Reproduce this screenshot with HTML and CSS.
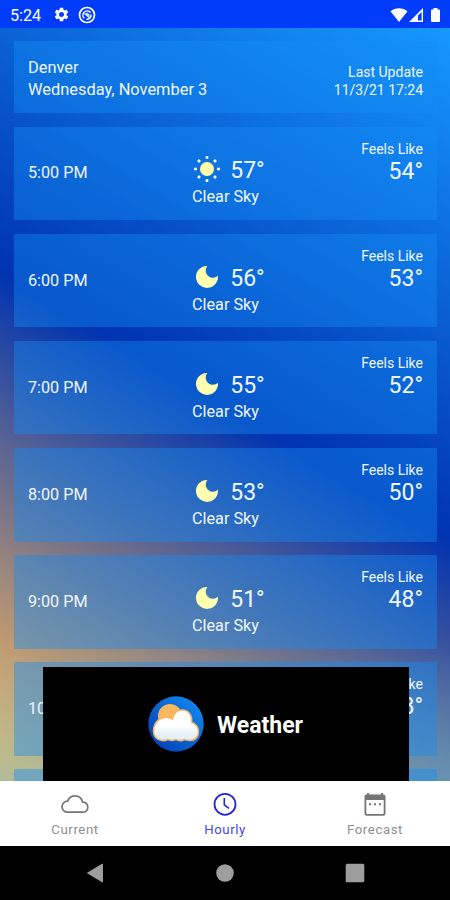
FILE: index.html
```html
<!DOCTYPE html>
<html lang="en">
<head>
    <meta charset="UTF-8">
    <meta name="viewport" content="width=device-width, initial-scale=1.0">
    <title>Weather - Hourly</title>
    <link rel="stylesheet" href="styles.css">
</head>
<body>
    <svg width="0" height="0" class="sprites">
        <symbol id="moon" viewBox="0 0 24 24">
            <path fill="#ffffb0" d="M12 .9A11 11 0 1 0 22.9 10.6C20.5 13.2 16.6 13.6 13.600 11.200C10.300 8.600 9.900 3.900 12.400 .9Z"/>
        </symbol>
    </svg>

    <div class="status-bar">
        <span class="clock">5:24</span>
        <svg class="gear" width="17" height="17" viewBox="0 0 24 24"><path fill="#fff" d="M19.14 12.94c.04-.3.06-.61.06-.94 0-.32-.02-.64-.07-.94l2.030-1.580c.18-.14.23-.41.12-.61l-1.920-3.320c-.12-.22-.37-.29-.59-.22l-2.390.96c-.5-.38-1.030-.7-1.620-.94l-.36-2.540c-.04-.24-.24-.41-.48-.41h-3.840c-.24 0-.43.17-.47.41l-.36 2.540c-.59.24-1.130.57-1.620.94l-2.390-.96c-.22-.08-.47 0-.59.22L2.740 8.870c-.12.21-.08.47.12.61l2.030 1.580c-.05.3-.09.63-.09.94s.02.64.07.94l-2.030 1.580c-.18.14-.23.41-.12.61l1.920 3.320c.12.22.37.29.59.22l2.390-.96c.5.38 1.030.7 1.620.94l.36 2.540c.05.24.24.41.48.41h3.840c.24 0 .44-.17.47-.41l.36-2.540c.59-.24 1.130-.56 1.620-.94l2.390.96c.22.08.47 0 .59-.22l1.920-3.320c.12-.22.07-.47-.12-.61l-2.010-1.580zM12 15.600c-1.980 0-3.600-1.620-3.600-3.600s1.620-3.600 3.600-3.600 3.600 1.620 3.600 3.600-1.620 3.600-3.600 3.600z"/></svg>
        <svg class="sync" width="18" height="18" viewBox="0 0 18 18" fill="none" stroke="#fff">
            <circle cx="9" cy="9" r="7.500" stroke-width="1.700"/>
            <path stroke-width="1.400" d="M6.200 12.200A4.300 4.300 0 0 1 6 6.200C8 4.200 11 4.500 12.500 6.500M13.100 8.500A4.300 4.300 0 0 1 8.500 13.200M6.500 7.500l5 4M8.500 7l3 2.500"/>
        </svg>
        <svg class="signals" width="52" height="16" viewBox="0 0 52 16" fill="#fff">
            <path d="M.5 4.200C5.300 .2 12.700 .2 17.500 4.200L9 15z"/>
            <path fill-rule="evenodd" d="M33 1v14H19zM31.600 5L28 8.600v5h3.600z"/>
            <path d="M43.500 1h4v1.500h1.500q1 0 1 1V14q0 1-1 1h-7q-1 0-1-1V3.500q0-1 1-1h1.500z"/>
        </svg>
    </div>

    <div class="screen">
        <div class="card header">
            <div class="place">Denver<br>Wednesday, November 3</div>
            <div class="update">Last Update<br>11/3/21 17:24</div>
        </div>

        <div class="card">
            <div class="time">5:00 PM</div>
            <div class="weather">
                <div class="temp">
                    <svg width="28" height="28" viewBox="0 0 28 28">
                        <circle cx="14" cy="14" r="7" fill="#ffffa8"/>
                        <path stroke="#ffffd0" stroke-width="2.600" d="M14 1v2.800M14 24.200V27M1 14h3M24 14h3M5 5l2 2M21 21l2 2M5 23l2-2M21 7l2-2"/>
                    </svg>
                    <span>57°</span>
                </div>
                <div>Clear Sky</div>
            </div>
            <div class="feels">Feels Like<b>54°</b></div>
        </div>

        <div class="card">
            <div class="time">6:00 PM</div>
            <div class="weather">
                <div class="temp"><svg class="moon" width="28" height="24"><use href="#moon"/></svg><span>56°</span></div>
                <div>Clear Sky</div>
            </div>
            <div class="feels">Feels Like<b>53°</b></div>
        </div>

        <div class="card">
            <div class="time">7:00 PM</div>
            <div class="weather">
                <div class="temp"><svg class="moon" width="28" height="24"><use href="#moon"/></svg><span>55°</span></div>
                <div>Clear Sky</div>
            </div>
            <div class="feels">Feels Like<b>52°</b></div>
        </div>

        <div class="card">
            <div class="time">8:00 PM</div>
            <div class="weather">
                <div class="temp"><svg class="moon" width="28" height="24"><use href="#moon"/></svg><span>53°</span></div>
                <div>Clear Sky</div>
            </div>
            <div class="feels">Feels Like<b>50°</b></div>
        </div>

        <div class="card">
            <div class="time">9:00 PM</div>
            <div class="weather">
                <div class="temp"><svg class="moon" width="28" height="24"><use href="#moon"/></svg><span>51°</span></div>
                <div>Clear Sky</div>
            </div>
            <div class="feels">Feels Like<b>48°</b></div>
        </div>

        <div class="card">
            <div class="time">10</div>
            <div class="feels">ke<b>8°</b></div>
        </div>

        <div class="card"></div>

        <!-- banner over the list -->
        <div class="banner">
            <svg width="56" height="56" viewBox="0 0 56 56">
                <defs>
                    <linearGradient id="disc" x1="1" y1="0" x2="0" y2="1">
                        <stop offset="0" stop-color="#1590f5"/>
                        <stop offset="1" stop-color="#0038b0"/>
                    </linearGradient>
                    <linearGradient id="puff" x1="0" y1="0" x2="0" y2="1">
                        <stop offset=".5" stop-color="#fff"/>
                        <stop offset="1" stop-color="#dceaf5"/>
                    </linearGradient>
                </defs>
                <circle cx="28" cy="28" r="27.700" fill="url(#disc)"/>
                <circle cx="22" cy="20" r="12" fill="#f8b75c"/>
                <path fill="url(#puff)" stroke="#f6b763" stroke-width="1.500" d="M14 44.500C8.500 44 5.500 40 5.500 35.500C5.500 28 10 22.500 16 21.500Q20 20.500 24.500 23C26 16.500 30 13.500 35 14C41 14.500 44.500 20 43.500 26C48 28 50.500 32 50.500 36C50.500 41 47 44.500 42 44.500Q38 44.500 36.500 43.500Q34 45 31 44.500L28 43.500L24 44.500L19.500 43.500Q17 45 14 44.500Z"/>
            </svg>
            <span>Weather</span>
        </div>
    </div>

    <div class="tabs">
        <div class="tab">
            <svg width="30" height="26" viewBox="0 0 30 26" fill="none" stroke="#757575" stroke-width="1.700">
                <path d="M7.500 21.200A5.500 5.500 0 0 1 7.500 10.200C9 6.500 11.500 4.800 15 4.800C19 4.800 21.800 7.300 22.600 11.200C25.800 11.400 27.800 13.500 27.800 16.200C27.800 19.200 25.600 21.200 22.500 21.200Z"/>
            </svg>
            <span>Current</span>
        </div>
        <div class="tab active">
            <svg width="30" height="26" viewBox="0 0 30 26" fill="none" stroke="#2424dc" stroke-width="1.800">
                <circle cx="15" cy="13.300" r="10.500"/>
                <path stroke-width="1.600" d="M14.300 7v6.800l4.700 3.500"/>
            </svg>
            <span>Hourly</span>
        </div>
        <div class="tab">
            <svg width="30" height="26" viewBox="0 0 30 26">
                <path fill="#757575" fill-rule="evenodd" d="M7 2h2v1.500h12V2h2v1.500h.5q2 0 2 2v17q0 2.200-2.200 2.200H6.700q-2.200 0-2.200-2.200v-17q0-2 2-2H7zM6.300 9v13q0 1 1 1h15.400q1 0 1-1V9z"/>
                <path fill="#757575" d="M9 12.300h2v2H9zM14 12.300h2v2h-2zM19 12.300h2v2h-2z"/>
            </svg>
            <span>Forecast</span>
        </div>
    </div>

    <div class="nav-bar">
        <svg width="20" height="20" viewBox="0 0 20 20"><path fill="#9e9e9e" stroke="#9e9e9e" stroke-linejoin="round" d="M2.500 10L17.500 1v18z"/></svg>
        <svg width="20" height="20" viewBox="0 0 20 20"><circle cx="10" cy="10" r="8.800" fill="#9e9e9e"/></svg>
        <svg width="20" height="20" viewBox="0 0 20 20"><rect x=".7" y=".7" width="18.600" height="18.600" rx="1.500" fill="#9e9e9e"/></svg>
    </div>
</body>
</html>
```
FILE: styles.css
```css
body {
    margin: 0;
    width: 450px;
    height: 900px;
    overflow: hidden;
    display: flex;
    flex-direction: column;
    font-family: Roboto, sans-serif;
    font-size: 16.4px;
    color: #f0f6ff;
}

.sprites {
    position: absolute;
}

.status-bar {
    height: 28px;
    flex: none;
    box-sizing: border-box;
    padding: 1px 8px 0 10px;
    display: flex;
    align-items: center;
    background-color: #003cfa;
    color: white;
}

.clock {
    width: 43px;
    padding-top: 1px;
    font-size: 16.2px;
}

.gear {
    margin-right: 8px;
}

.signals {
    margin-left: auto;
}

/* Hourly list */
.screen {
    position: relative;
    height: 752.5px;
    flex: none;
    overflow: hidden;
    box-sizing: border-box;
    padding: 13.2px 13px 0 14px;
    display: flex;
    flex-direction: column;
    gap: 13.5px;
    background: linear-gradient(to bottom, rgba(70, 185, 235, 0) 81%, rgba(70, 185, 235, 0.42)),
        linear-gradient(210.9deg, #1698ff, #0033b0 50%, #ffbc5c 98%);
}

.card {
    height: 93.6px;
    flex: none;
    box-sizing: border-box;
    padding: 0 14px;
    border-radius: 1px;
    display: grid;
    grid-template-columns: 1fr 1fr 1fr;
    align-items: center;
    background-color: rgba(20, 140, 245, 0.42);
}

.header {
    height: 72px;
    display: flex;
    justify-content: space-between;
    line-height: 22px;
}

.place {
    padding-top: 3px;
}

.update {
    padding-top: 7px;
    font-size: 14px;
    line-height: 18px;
    text-align: right;
}

.time {
    padding-bottom: 1px;
    font-size: 16.2px;
}

.weather {
    padding-top: 18px;
    text-align: center;
    font-size: 16.2px;
    line-height: 22px;
}

.temp {
    display: flex;
    justify-content: center;
    align-items: center;
    gap: 9px;
    height: 30px;
    padding-left: 7px;
    font-size: 23px;
}

.temp svg {
    margin-bottom: 4px;
}

.feels {
    grid-column: 3;
    align-self: start;
    padding-top: 14px;
    font-size: 14px;
    line-height: 17px;
    text-align: right;
}

.feels b {
    display: block;
    font-size: 23px;
    font-weight: normal;
    line-height: 28px;
}

.banner {
    position: absolute;
    left: 42.5px;
    right: 41.5px;
    bottom: 0;
    height: 114px;
    display: flex;
    justify-content: center;
    align-items: center;
    gap: 13px;
    background-color: black;
    color: white;
    font-size: 23px;
    font-weight: bold;
}

.banner span {
    padding-top: 3px;
}

/* Bottom tabs */
.tabs {
    height: 65.5px;
    flex: none;
    display: grid;
    grid-template-columns: 1fr 1fr 1fr;
    background-color: white;
    color: #8e8e8e;
    font-size: 13.2px;
    letter-spacing: 0.6px;
}

.tab {
    display: flex;
    flex-direction: column;
    align-items: center;
    padding-top: 10.5px;
    gap: 5px;
}

.active {
    color: #4545ee;
}

.nav-bar {
    flex: 1;
    display: flex;
    justify-content: center;
    align-items: center;
    gap: 110px;
    background-color: black;
}
```
